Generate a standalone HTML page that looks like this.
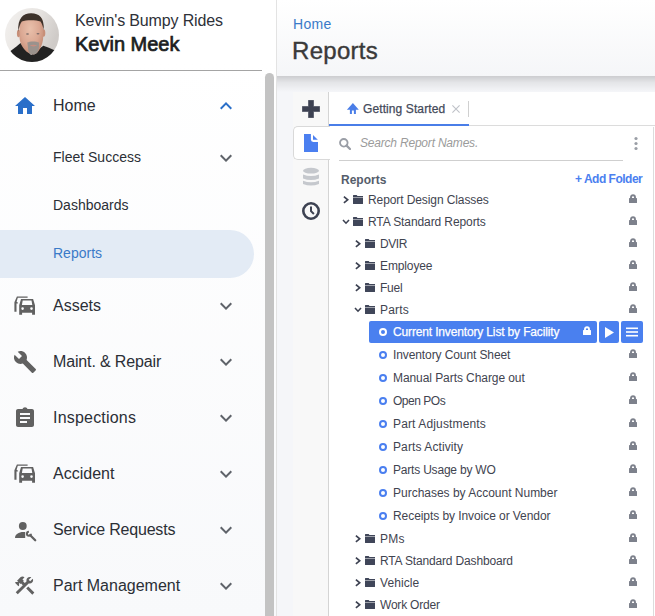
<!DOCTYPE html>
<html><head><meta charset="utf-8">
<style>
*{box-sizing:border-box;margin:0;padding:0}
html,body{width:655px;height:616px;overflow:hidden;background:#f5f6f9;font-family:"Liberation Sans",sans-serif;color:#212121;position:relative}
.abs{position:absolute}
#side{position:absolute;left:0;top:0;width:277px;height:616px;background:linear-gradient(#ffffff 10%,#f8f9fb);border-right:1px solid #e3e3e3}
#thumb{position:absolute;left:265px;top:73px;width:9px;height:560px;background:#c3c3c3;border-radius:5px}
.nav{position:absolute;left:53px;font-size:16px;color:#2b2f36;white-space:nowrap}
.sub{position:absolute;left:53px;font-size:14px;color:#2b2f36;white-space:nowrap}
#mhead{position:absolute;left:277px;top:0;width:378px;height:76px;background:linear-gradient(#ffffff,#f5f6f8)}
.row{position:absolute;font-size:12px;color:#3f4450;white-space:nowrap;letter-spacing:-0.15px}
</style></head><body>
<div id="side"><svg class="abs" style="left:5px;top:8px" width="54" height="54" viewBox="0 0 54 54">
 <defs><clipPath id="cp"><circle cx="27" cy="27" r="27"/></clipPath>
 <linearGradient id="bg" x1="0" y1="0" x2="1" y2="0.4"><stop offset="0" stop-color="#f3f1ef"/><stop offset="0.55" stop-color="#e8e5e2"/><stop offset="1" stop-color="#cfcbc8"/></linearGradient>
 <radialGradient id="sk" cx="0.45" cy="0.35" r="0.65"><stop offset="0" stop-color="#e9c0ab"/><stop offset="0.6" stop-color="#dba893"/><stop offset="1" stop-color="#c38c76"/></radialGradient>
 <filter id="bl"><feGaussianBlur stdDeviation="0.55"/></filter></defs>
 <g clip-path="url(#cp)"><rect width="54" height="54" fill="url(#bg)"/>
 <g filter="url(#bl)">
 <path d="M0 54 L2 46 C5 43 10 40 15.5 35 L26 47 L38.3 37.7 C42 39 46 40.5 49 42 L54 46 L54 54Z" fill="#222"/>
 
 <ellipse cx="13.6" cy="25.5" rx="1.7" ry="3.8" fill="#c78f78"/><ellipse cx="38.6" cy="25" rx="1.7" ry="3.8" fill="#c78f78"/>
 <path d="M14.5 17 C14.5 9 20 7 26.5 7 C33 7 38.2 9 38.2 17 L38.2 29 C38.2 37 33 46.5 28.5 46.5 C22 46.5 15 38 14.5 30Z" fill="url(#sk)"/>
 <path d="M13.3 23.7 C12.5 10 18 5.3 26 5.2 C34 5.1 39.5 9.5 38.7 22 C38 18.5 37 15.5 35.5 13.5 C31 11.8 21 11.8 16.8 13.5 C15 16 14 19.5 13.3 23.7Z" fill="#3d3029"/>
 <ellipse cx="22.5" cy="26" rx="1.5" ry="0.7" fill="#7a6a68"/><ellipse cx="33" cy="25.8" rx="1.5" ry="0.7" fill="#7a6a68"/>
 <path d="M22.3 34.5 C24.5 33 31.5 33 34 34.5 L34 38.5 C33.5 44.5 31 46.5 28.3 46.5 C25 46.5 23 44.5 23 39.5Z" fill="#9a928d"/>
 <path d="M24.8 37.3 C27 36.5 30 36.5 32 37.3 C30.5 38.8 26.5 38.8 24.8 37.3Z" fill="#c88d80"/>
 </g></g></svg><div class="abs" style="left:75px;top:12px;font-size:16px;color:#2e3138;white-space:nowrap;letter-spacing:-0.15px">Kevin's Bumpy Rides</div><div class="abs" style="left:75px;top:33px;font-size:20px;color:#1b1d22;white-space:nowrap;-webkit-text-stroke:0.7px #1b1d22">Kevin Meek</div><div class="abs" style="left:0;top:70px;width:262px;height:1px;background:#a4a4a4"></div><svg class="abs" style="left:13px;top:94px" width="24" height="24" viewBox="0 0 24 24"><path d="M10 20v-6h4v6h5v-8h3L12 3 2 12h3v8z" fill="#2a6fc9"/></svg><div class="nav" style="top:97px">Home</div><svg class="abs" style="left:214px;top:94px" width="24" height="24" viewBox="0 0 24 24"><path d="M7.41 15.41L12 10.83l4.59 4.58L18 14l-6-6-6 6z" fill="#2a6fc9"/></svg><div class="sub" style="top:149px">Fleet Success</div><svg class="abs" style="left:214px;top:146px" width="24" height="24" viewBox="0 0 24 24"><path d="M7.41 8.59L12 13.17l4.59-4.58L18 10l-6 6-6-6z" fill="#5f636a"/></svg><div class="sub" style="top:197px">Dashboards</div><div class="abs" style="left:0;top:230px;width:254px;height:48px;background:#e3ebf5;border-radius:0 24px 24px 0"></div><div class="sub" style="top:245px;color:#3a7ac8">Reports</div><svg class="abs" style="left:10px;top:292px" width="30" height="26" viewBox="0 0 30 26"><path fill="#616161" fill-rule="evenodd" d="M11 7.1H23.1L25 13.3V22.7H22.1V20.7H12.1V22.7H9.2V13.3Z M11.9 13.1H22.3L21.5 8.5H12.7Z M11.3 16.6a1.3 1.3 0 1 0 2.6 0a1.3 1.3 0 1 0 -2.6 0Z M20.2 16.6a1.3 1.3 0 1 0 2.6 0a1.3 1.3 0 1 0 -2.6 0Z"/><path fill="#616161" d="M4.4 19.7V10.2L6.9 4.4H17.6V5.7H7.8L6.6 9.8L7.8 10.4V11.4H6.5V19.7Z"/></svg><div class="nav" style="top:297px;letter-spacing:0px">Assets</div><svg class="abs" style="left:214px;top:294px" width="24" height="24" viewBox="0 0 24 24"><path d="M7.41 8.59L12 13.17l4.59-4.58L18 10l-6 6-6-6z" fill="#5f636a"/></svg><svg class="abs" style="left:13px;top:350px" width="24" height="24" viewBox="0 0 24 24"><path d="M22.7 19l-9.1-9.1c.9-2.3.4-5-1.5-6.9-2-2-5-2.4-7.4-1.3L9 6 6 9 1.6 4.7C.4 7.1.9 10.1 2.9 12.1c1.9 1.9 4.6 2.4 6.9 1.5l9.1 9.1c.4.4 1 .4 1.4 0l2.3-2.3c.5-.4.5-1.1.1-1.4z" fill="#616161"/></svg><div class="nav" style="top:353px;letter-spacing:-0.14px">Maint. &amp; Repair</div><svg class="abs" style="left:214px;top:350px" width="24" height="24" viewBox="0 0 24 24"><path d="M7.41 8.59L12 13.17l4.59-4.58L18 10l-6 6-6-6z" fill="#5f636a"/></svg><svg class="abs" style="left:13px;top:406px" width="24" height="24" viewBox="0 0 24 24"><path d="M19 3h-4.6C14.2 2 13.2 1.2 12 1.2S9.8 2 9.6 3H5c-1.1 0-2 .9-2 2v14c0 1.1.9 2 2 2h14c1.1 0 2-.9 2-2V5c0-1.1-.9-2-2-2zM14 17H7v-2h7v2zm3-4H7v-2h10v2zm0-4H7V7h10v2z" fill="#616161"/></svg><div class="nav" style="top:409px;letter-spacing:0.2px">Inspections</div><svg class="abs" style="left:214px;top:406px" width="24" height="24" viewBox="0 0 24 24"><path d="M7.41 8.59L12 13.17l4.59-4.58L18 10l-6 6-6-6z" fill="#5f636a"/></svg><svg class="abs" style="left:10px;top:460px" width="30" height="26" viewBox="0 0 30 26"><path fill="#616161" fill-rule="evenodd" d="M11 7.1H23.1L25 13.3V22.7H22.1V20.7H12.1V22.7H9.2V13.3Z M11.9 13.1H22.3L21.5 8.5H12.7Z M11.3 16.6a1.3 1.3 0 1 0 2.6 0a1.3 1.3 0 1 0 -2.6 0Z M20.2 16.6a1.3 1.3 0 1 0 2.6 0a1.3 1.3 0 1 0 -2.6 0Z"/><path fill="#616161" d="M4.4 19.7V10.2L6.9 4.4H17.6V5.7H7.8L6.6 9.8L7.8 10.4V11.4H6.5V19.7Z"/></svg><div class="nav" style="top:465px;letter-spacing:0px">Accident</div><svg class="abs" style="left:214px;top:462px" width="24" height="24" viewBox="0 0 24 24"><path d="M7.41 8.59L12 13.17l4.59-4.58L18 10l-6 6-6-6z" fill="#5f636a"/></svg><svg class="abs" style="left:12px;top:518px" width="28" height="26" viewBox="0 0 28 26"><g fill="#616161"><circle cx="10.8" cy="8" r="3.9"/><path d="M3 19.9C3 16.5 6.5 14.1 11.5 14.1H13.2V19.9Z"/></g><path d="M18.9 15.8A2 2 0 1 1 16.9 13.8" stroke="#616161" stroke-width="2" fill="none"/><path d="M18.2 17.3L23.2 22.3" stroke="#616161" stroke-width="2.3" stroke-linecap="round"/></svg><div class="nav" style="top:521px;letter-spacing:-0.2px">Service Requests</div><svg class="abs" style="left:214px;top:518px" width="24" height="24" viewBox="0 0 24 24"><path d="M7.41 8.59L12 13.17l4.59-4.58L18 10l-6 6-6-6z" fill="#5f636a"/></svg><svg class="abs" style="left:13px;top:574px" width="23" height="23" viewBox="0 0 24 24"><path fill="#616161" d="M13.78 15.17l2.12-2.12 6.36 6.36-2.12 2.12zM17.5 10c1.93 0 3.5-1.57 3.5-3.5 0-.58-.16-1.12-.41-1.6l-2.7 2.7-1.49-1.49 2.7-2.7c-.48-.25-1.02-.41-1.6-.41C15.57 3 14 4.57 14 6.5c0 .41.08.8.21 1.16l-1.85 1.850-1.78-1.78.71-.71-1.41-1.41L12 3.49c-1.17-1.17-3.07-1.17-4.24 0L4.22 7.03l1.41 1.41H2.81l-.71.71 3.54 3.540.71-.71V9.15l1.41 1.41.71-.71 1.780 1.78-7.41 7.41 2.12 2.12L16.34 9.79c.36.13.75.21 1.16.21z"/></svg><div class="nav" style="top:577px;letter-spacing:0px">Part Management</div><svg class="abs" style="left:214px;top:574px" width="24" height="24" viewBox="0 0 24 24"><path d="M7.41 8.59L12 13.17l4.59-4.58L18 10l-6 6-6-6z" fill="#5f636a"/></svg>
<div id="thumb"></div>
</div>

<div id="mhead"></div>
<div class="abs" style="left:277px;top:76px;width:378px;height:16px;background:linear-gradient(rgba(0,0,0,.17),rgba(0,0,0,.07) 40%,rgba(0,0,0,0))"></div>
<div class="abs" style="left:293px;top:16px;font-size:14px;color:#3a7ac8;letter-spacing:0.3px">Home</div>
<div class="abs" style="left:292px;top:37px;font-size:24px;color:#3a3a3a;-webkit-text-stroke:0.4px #3a3a3a;letter-spacing:0.3px">Reports</div>
<div class="abs" style="left:293px;top:92px;width:36px;height:524px;background:#f8f8f8"></div>
<div class="abs" style="left:329px;top:92px;width:326px;height:34px;background:#fff"></div>
<div class="abs" style="left:328px;top:92px;width:1px;height:524px;background:#d4d4d4"></div>
<div class="abs" style="left:329px;top:126px;width:326px;height:490px;background:#fff"></div>
<div class="abs" style="left:469px;top:125px;width:186px;height:1px;background:#dcdcdc"></div>
<div class="abs" style="left:329px;top:124px;width:140px;height:2px;background:#4a7ee8"></div>
<div class="abs" style="left:653px;top:127px;width:1px;height:489px;background:#dcdcdc"></div>
<div class="abs" style="left:293px;top:126px;width:37px;height:34px;background:#fff;border:1px solid #d9d9d9;border-right:none;border-radius:5px 0 0 5px"></div>
<svg class="abs" style="left:302px;top:100px" width="18" height="18" viewBox="0 0 18 18"><path d="M6.5 0.3h5v6.2h6.2v5h-6.2v6.2h-5v-6.2H0.3v-5h6.2z" fill="#3d4252" stroke="#3d4252" stroke-width="0.6" stroke-linejoin="round"/></svg>
<svg class="abs" style="left:304px;top:134px" width="14" height="18" viewBox="0 0 14 18"><path d="M0 0H6.9V5.6Q6.9 8 9.3 8H14V18H0Z" fill="#4b7ff0"/><path d="M9 1.1L13.8 5.7H9Z" fill="#4b7ff0"/></svg>
<svg class="abs" style="left:302px;top:167px" width="18" height="20" viewBox="0 0 18 20"><g fill="#c5c8cd"><ellipse cx="9" cy="3.65" rx="8" ry="2.85"/><path d="M1 7.6Q9 10.6 17 7.6V11.4Q9 14.4 1 11.4Z"/><path d="M1 13.8Q9 16.8 17 13.8V17Q9 20 1 17Z"/></g></svg>
<svg class="abs" style="left:302px;top:202px" width="18" height="18" viewBox="0 0 18 18"><circle cx="9" cy="9" r="7.7" fill="none" stroke="#3d4252" stroke-width="2.6"/><path d="M8 4.5h2v4.2l2.6 2.6-1.4 1.4L8 9.5z" fill="#3d4252"/></svg>
<svg class="abs" style="left:346px;top:102px" width="14" height="13" viewBox="0 0 14 13"><path d="M0.9 7.7L6.9 1.1L12.8 7.7H9.9V11.9H7.9V8.6H5.9V11.9H3.9V7.7Z" fill="#4a7ee8"/></svg>
<div class="abs" style="left:363px;top:102px;font-size:12px;color:#444a5a;-webkit-text-stroke:0.25px #444a5a;white-space:nowrap;letter-spacing:0.1px">Getting Started</div>
<svg class="abs" style="left:452px;top:105px" width="8" height="8" viewBox="0 0 8 8"><path d="M0.4 0.4L7.6 7.6M7.6 0.4L0.4 7.6" stroke="#bfc2c8" stroke-width="1.1"/></svg>
<div class="abs" style="left:468px;top:101px;width:1px;height:16px;background:#d0d0d0"></div>
<svg class="abs" style="left:339px;top:138px" width="12" height="12" viewBox="0 0 12 12"><circle cx="4.8" cy="4.8" r="3.8" fill="none" stroke="#9a9ea6" stroke-width="1.8"/><path d="M7.6 7.6L11 11" stroke="#9a9ea6" stroke-width="2.2" stroke-linecap="round"/></svg>
<div class="abs" style="left:360px;top:136px;font-size:12px;font-style:italic;color:#9b9b9b;white-space:nowrap;letter-spacing:-0.2px">Search Report Names.</div>
<div class="abs" style="left:339px;top:160px;width:284px;height:1px;background:#cfcfcf"></div>
<svg class="abs" style="left:633px;top:136px" width="6" height="16" viewBox="0 0 6 16"><g fill="#9a9ea6"><circle cx="3" cy="2.5" r="1.6"/><circle cx="3" cy="7.5" r="1.6"/><circle cx="3" cy="12.5" r="1.6"/></g></svg>
<div class="abs" style="left:341px;top:173px;font-size:12px;font-weight:bold;color:#555d6b;white-space:nowrap">Reports</div>
<div class="abs" style="left:575px;top:172px;font-size:12px;font-weight:bold;color:#4b80f0;white-space:nowrap;letter-spacing:-0.5px">+ Add Folder</div>
<svg class="abs" style="left:343px;top:196px" width="6" height="8" viewBox="0 0 6 8"><path d="M0.9 0.7L4.7 3.8L0.9 6.9" fill="none" stroke="#3d4252" stroke-width="1.7"/></svg><svg class="abs" style="left:353px;top:195px" width="10" height="9" viewBox="0 0 10 9"><path d="M0 0.4Q0 0 0.4 0H3.6L4.5 0.9H10V1.9H0Z M0 2.6H10V8.5Q10 9 9.5 9H0.5Q0 9 0 8.5Z" fill="#404659"/></svg><div class="row" style="left:368px;top:193px;letter-spacing:-0.095px">Report Design Classes</div><svg class="abs" style="left:629px;top:194px" width="8" height="9" viewBox="0 0 8 9"><path d="M2 4.5V3.2a2 2 0 0 1 4 0V4.5" fill="none" stroke="#7d818c" stroke-width="1.9"/><rect x="0" y="4" width="8" height="5" rx="0.5" fill="#7d818c"/></svg><svg class="abs" style="left:342px;top:219px" width="8" height="6" viewBox="0 0 8 6"><path d="M1 1l3 3.2L7 1" fill="none" stroke="#3d4252" stroke-width="1.6"/></svg><svg class="abs" style="left:353px;top:217px" width="10" height="9" viewBox="0 0 10 9"><path d="M0 0.4Q0 0 0.4 0H3.6L4.5 0.9H10V1.9H0Z M0 2.6H10V8.5Q10 9 9.5 9H0.5Q0 9 0 8.5Z" fill="#404659"/></svg><div class="row" style="left:368px;top:215px;letter-spacing:-0.097px">RTA Standard Reports</div><svg class="abs" style="left:629px;top:216px" width="8" height="9" viewBox="0 0 8 9"><path d="M2 4.5V3.2a2 2 0 0 1 4 0V4.5" fill="none" stroke="#7d818c" stroke-width="1.9"/><rect x="0" y="4" width="8" height="5" rx="0.5" fill="#7d818c"/></svg><svg class="abs" style="left:355px;top:240px" width="6" height="8" viewBox="0 0 6 8"><path d="M0.9 0.7L4.7 3.8L0.9 6.9" fill="none" stroke="#3d4252" stroke-width="1.7"/></svg><svg class="abs" style="left:365px;top:239px" width="10" height="9" viewBox="0 0 10 9"><path d="M0 0.4Q0 0 0.4 0H3.6L4.5 0.9H10V1.9H0Z M0 2.6H10V8.5Q10 9 9.5 9H0.5Q0 9 0 8.5Z" fill="#404659"/></svg><div class="row" style="left:380px;top:237px;letter-spacing:-0.45px">DVIR</div><svg class="abs" style="left:629px;top:238px" width="8" height="9" viewBox="0 0 8 9"><path d="M2 4.5V3.2a2 2 0 0 1 4 0V4.5" fill="none" stroke="#7d818c" stroke-width="1.9"/><rect x="0" y="4" width="8" height="5" rx="0.5" fill="#7d818c"/></svg><svg class="abs" style="left:355px;top:262px" width="6" height="8" viewBox="0 0 6 8"><path d="M0.9 0.7L4.7 3.8L0.9 6.9" fill="none" stroke="#3d4252" stroke-width="1.7"/></svg><svg class="abs" style="left:365px;top:261px" width="10" height="9" viewBox="0 0 10 9"><path d="M0 0.4Q0 0 0.4 0H3.6L4.5 0.9H10V1.9H0Z M0 2.6H10V8.5Q10 9 9.5 9H0.5Q0 9 0 8.5Z" fill="#404659"/></svg><div class="row" style="left:380px;top:259px;letter-spacing:-0.121px">Employee</div><svg class="abs" style="left:629px;top:260px" width="8" height="9" viewBox="0 0 8 9"><path d="M2 4.5V3.2a2 2 0 0 1 4 0V4.5" fill="none" stroke="#7d818c" stroke-width="1.9"/><rect x="0" y="4" width="8" height="5" rx="0.5" fill="#7d818c"/></svg><svg class="abs" style="left:355px;top:284px" width="6" height="8" viewBox="0 0 6 8"><path d="M0.9 0.7L4.7 3.8L0.9 6.9" fill="none" stroke="#3d4252" stroke-width="1.7"/></svg><svg class="abs" style="left:365px;top:283px" width="10" height="9" viewBox="0 0 10 9"><path d="M0 0.4Q0 0 0.4 0H3.6L4.5 0.9H10V1.9H0Z M0 2.6H10V8.5Q10 9 9.5 9H0.5Q0 9 0 8.5Z" fill="#404659"/></svg><div class="row" style="left:380px;top:281px;letter-spacing:-0.217px">Fuel</div><svg class="abs" style="left:629px;top:282px" width="8" height="9" viewBox="0 0 8 9"><path d="M2 4.5V3.2a2 2 0 0 1 4 0V4.5" fill="none" stroke="#7d818c" stroke-width="1.9"/><rect x="0" y="4" width="8" height="5" rx="0.5" fill="#7d818c"/></svg><svg class="abs" style="left:354px;top:307px" width="8" height="6" viewBox="0 0 8 6"><path d="M1 1l3 3.2L7 1" fill="none" stroke="#3d4252" stroke-width="1.6"/></svg><svg class="abs" style="left:365px;top:305px" width="10" height="9" viewBox="0 0 10 9"><path d="M0 0.4Q0 0 0.4 0H3.6L4.5 0.9H10V1.9H0Z M0 2.6H10V8.5Q10 9 9.5 9H0.5Q0 9 0 8.5Z" fill="#404659"/></svg><div class="row" style="left:380px;top:303px;letter-spacing:0.175px">Parts</div><svg class="abs" style="left:629px;top:304px" width="8" height="9" viewBox="0 0 8 9"><path d="M2 4.5V3.2a2 2 0 0 1 4 0V4.5" fill="none" stroke="#7d818c" stroke-width="1.9"/><rect x="0" y="4" width="8" height="5" rx="0.5" fill="#7d818c"/></svg><div class="abs" style="left:369px;top:321px;width:228px;height:22px;background:#4a80ef;border-radius:2px"></div><div class="abs" style="left:599px;top:321px;width:20px;height:22px;background:#4a80ef;border-radius:2px"></div><div class="abs" style="left:621px;top:321px;width:22px;height:22px;background:#4a80ef;border-radius:2px"></div><svg class="abs" style="left:605px;top:327px" width="9" height="11" viewBox="0 0 9 11"><path d="M0 0L9 5.5L0 11z" fill="#fff"/></svg><svg class="abs" style="left:626px;top:327px" width="12" height="10" viewBox="0 0 12 10"><g fill="#fff"><rect y="0.5" width="12" height="1.6"/><rect y="4.2" width="12" height="1.6"/><rect y="7.9" width="12" height="1.6"/></g></svg><svg class="abs" style="left:379px;top:328px" width="8" height="8" viewBox="0 0 8 8"><circle cx="4" cy="4" r="3" fill="none" stroke="#fff" stroke-width="2"/></svg><div class="row" style="left:393px;top:325px;letter-spacing:-0.15px;color:#fff;-webkit-text-stroke:0.25px #fff">Current Inventory List by Facility</div><svg class="abs" style="left:583px;top:326px" width="8" height="9" viewBox="0 0 8 9"><path d="M2 4.5V3.2a2 2 0 0 1 4 0V4.5" fill="none" stroke="#fff" stroke-width="1.9"/><rect x="0" y="4" width="8" height="5" rx="0.5" fill="#fff"/></svg><svg class="abs" style="left:379px;top:351px" width="8" height="8" viewBox="0 0 8 8"><circle cx="4" cy="4" r="3" fill="none" stroke="#4a7ff0" stroke-width="2"/></svg><div class="row" style="left:393px;top:348px;letter-spacing:-0.1px;">Inventory Count Sheet</div><svg class="abs" style="left:629px;top:349px" width="8" height="9" viewBox="0 0 8 9"><path d="M2 4.5V3.2a2 2 0 0 1 4 0V4.5" fill="none" stroke="#7d818c" stroke-width="1.9"/><rect x="0" y="4" width="8" height="5" rx="0.5" fill="#7d818c"/></svg><svg class="abs" style="left:379px;top:374px" width="8" height="8" viewBox="0 0 8 8"><circle cx="4" cy="4" r="3" fill="none" stroke="#4a7ff0" stroke-width="2"/></svg><div class="row" style="left:393px;top:371px;letter-spacing:-0.073px;">Manual Parts Charge out</div><svg class="abs" style="left:629px;top:372px" width="8" height="9" viewBox="0 0 8 9"><path d="M2 4.5V3.2a2 2 0 0 1 4 0V4.5" fill="none" stroke="#7d818c" stroke-width="1.9"/><rect x="0" y="4" width="8" height="5" rx="0.5" fill="#7d818c"/></svg><svg class="abs" style="left:379px;top:397px" width="8" height="8" viewBox="0 0 8 8"><circle cx="4" cy="4" r="3" fill="none" stroke="#4a7ff0" stroke-width="2"/></svg><div class="row" style="left:393px;top:394px;letter-spacing:-0.479px;">Open POs</div><svg class="abs" style="left:629px;top:395px" width="8" height="9" viewBox="0 0 8 9"><path d="M2 4.5V3.2a2 2 0 0 1 4 0V4.5" fill="none" stroke="#7d818c" stroke-width="1.9"/><rect x="0" y="4" width="8" height="5" rx="0.5" fill="#7d818c"/></svg><svg class="abs" style="left:379px;top:420px" width="8" height="8" viewBox="0 0 8 8"><circle cx="4" cy="4" r="3" fill="none" stroke="#4a7ff0" stroke-width="2"/></svg><div class="row" style="left:393px;top:417px;letter-spacing:0.137px;">Part Adjustments</div><svg class="abs" style="left:629px;top:418px" width="8" height="9" viewBox="0 0 8 9"><path d="M2 4.5V3.2a2 2 0 0 1 4 0V4.5" fill="none" stroke="#7d818c" stroke-width="1.9"/><rect x="0" y="4" width="8" height="5" rx="0.5" fill="#7d818c"/></svg><svg class="abs" style="left:379px;top:443px" width="8" height="8" viewBox="0 0 8 8"><circle cx="4" cy="4" r="3" fill="none" stroke="#4a7ff0" stroke-width="2"/></svg><div class="row" style="left:393px;top:440px;letter-spacing:0.104px;">Parts Activity</div><svg class="abs" style="left:629px;top:441px" width="8" height="9" viewBox="0 0 8 9"><path d="M2 4.5V3.2a2 2 0 0 1 4 0V4.5" fill="none" stroke="#7d818c" stroke-width="1.9"/><rect x="0" y="4" width="8" height="5" rx="0.5" fill="#7d818c"/></svg><svg class="abs" style="left:379px;top:466px" width="8" height="8" viewBox="0 0 8 8"><circle cx="4" cy="4" r="3" fill="none" stroke="#4a7ff0" stroke-width="2"/></svg><div class="row" style="left:393px;top:463px;letter-spacing:-0.2px;">Parts Usage by WO</div><svg class="abs" style="left:629px;top:464px" width="8" height="9" viewBox="0 0 8 9"><path d="M2 4.5V3.2a2 2 0 0 1 4 0V4.5" fill="none" stroke="#7d818c" stroke-width="1.9"/><rect x="0" y="4" width="8" height="5" rx="0.5" fill="#7d818c"/></svg><svg class="abs" style="left:379px;top:489px" width="8" height="8" viewBox="0 0 8 8"><circle cx="4" cy="4" r="3" fill="none" stroke="#4a7ff0" stroke-width="2"/></svg><div class="row" style="left:393px;top:486px;letter-spacing:-0.012px;">Purchases by Account Number</div><svg class="abs" style="left:629px;top:487px" width="8" height="9" viewBox="0 0 8 9"><path d="M2 4.5V3.2a2 2 0 0 1 4 0V4.5" fill="none" stroke="#7d818c" stroke-width="1.9"/><rect x="0" y="4" width="8" height="5" rx="0.5" fill="#7d818c"/></svg><svg class="abs" style="left:379px;top:512px" width="8" height="8" viewBox="0 0 8 8"><circle cx="4" cy="4" r="3" fill="none" stroke="#4a7ff0" stroke-width="2"/></svg><div class="row" style="left:393px;top:509px;letter-spacing:-0.068px;">Receipts by Invoice or Vendor</div><svg class="abs" style="left:629px;top:510px" width="8" height="9" viewBox="0 0 8 9"><path d="M2 4.5V3.2a2 2 0 0 1 4 0V4.5" fill="none" stroke="#7d818c" stroke-width="1.9"/><rect x="0" y="4" width="8" height="5" rx="0.5" fill="#7d818c"/></svg><svg class="abs" style="left:355px;top:535px" width="6" height="8" viewBox="0 0 6 8"><path d="M0.9 0.7L4.7 3.8L0.9 6.9" fill="none" stroke="#3d4252" stroke-width="1.7"/></svg><svg class="abs" style="left:365px;top:534px" width="10" height="9" viewBox="0 0 10 9"><path d="M0 0.4Q0 0 0.4 0H3.6L4.5 0.9H10V1.9H0Z M0 2.6H10V8.5Q10 9 9.5 9H0.5Q0 9 0 8.5Z" fill="#404659"/></svg><div class="row" style="left:380px;top:532px;letter-spacing:0.25px">PMs</div><svg class="abs" style="left:629px;top:533px" width="8" height="9" viewBox="0 0 8 9"><path d="M2 4.5V3.2a2 2 0 0 1 4 0V4.5" fill="none" stroke="#7d818c" stroke-width="1.9"/><rect x="0" y="4" width="8" height="5" rx="0.5" fill="#7d818c"/></svg><svg class="abs" style="left:355px;top:557px" width="6" height="8" viewBox="0 0 6 8"><path d="M0.9 0.7L4.7 3.8L0.9 6.9" fill="none" stroke="#3d4252" stroke-width="1.7"/></svg><svg class="abs" style="left:365px;top:556px" width="10" height="9" viewBox="0 0 10 9"><path d="M0 0.4Q0 0 0.4 0H3.6L4.5 0.9H10V1.9H0Z M0 2.6H10V8.5Q10 9 9.5 9H0.5Q0 9 0 8.5Z" fill="#404659"/></svg><div class="row" style="left:380px;top:554px;letter-spacing:-0.16px">RTA Standard Dashboard</div><svg class="abs" style="left:629px;top:555px" width="8" height="9" viewBox="0 0 8 9"><path d="M2 4.5V3.2a2 2 0 0 1 4 0V4.5" fill="none" stroke="#7d818c" stroke-width="1.9"/><rect x="0" y="4" width="8" height="5" rx="0.5" fill="#7d818c"/></svg><svg class="abs" style="left:355px;top:579px" width="6" height="8" viewBox="0 0 6 8"><path d="M0.9 0.7L4.7 3.8L0.9 6.9" fill="none" stroke="#3d4252" stroke-width="1.7"/></svg><svg class="abs" style="left:365px;top:578px" width="10" height="9" viewBox="0 0 10 9"><path d="M0 0.4Q0 0 0.4 0H3.6L4.5 0.9H10V1.9H0Z M0 2.6H10V8.5Q10 9 9.5 9H0.5Q0 9 0 8.5Z" fill="#404659"/></svg><div class="row" style="left:380px;top:576px;letter-spacing:0.083px">Vehicle</div><svg class="abs" style="left:629px;top:577px" width="8" height="9" viewBox="0 0 8 9"><path d="M2 4.5V3.2a2 2 0 0 1 4 0V4.5" fill="none" stroke="#7d818c" stroke-width="1.9"/><rect x="0" y="4" width="8" height="5" rx="0.5" fill="#7d818c"/></svg><svg class="abs" style="left:355px;top:601px" width="6" height="8" viewBox="0 0 6 8"><path d="M0.9 0.7L4.7 3.8L0.9 6.9" fill="none" stroke="#3d4252" stroke-width="1.7"/></svg><svg class="abs" style="left:365px;top:600px" width="10" height="9" viewBox="0 0 10 9"><path d="M0 0.4Q0 0 0.4 0H3.6L4.5 0.9H10V1.9H0Z M0 2.6H10V8.5Q10 9 9.5 9H0.5Q0 9 0 8.5Z" fill="#404659"/></svg><div class="row" style="left:380px;top:598px;letter-spacing:-0.206px">Work Order</div><svg class="abs" style="left:629px;top:599px" width="8" height="9" viewBox="0 0 8 9"><path d="M2 4.5V3.2a2 2 0 0 1 4 0V4.5" fill="none" stroke="#7d818c" stroke-width="1.9"/><rect x="0" y="4" width="8" height="5" rx="0.5" fill="#7d818c"/></svg>
</body></html>
